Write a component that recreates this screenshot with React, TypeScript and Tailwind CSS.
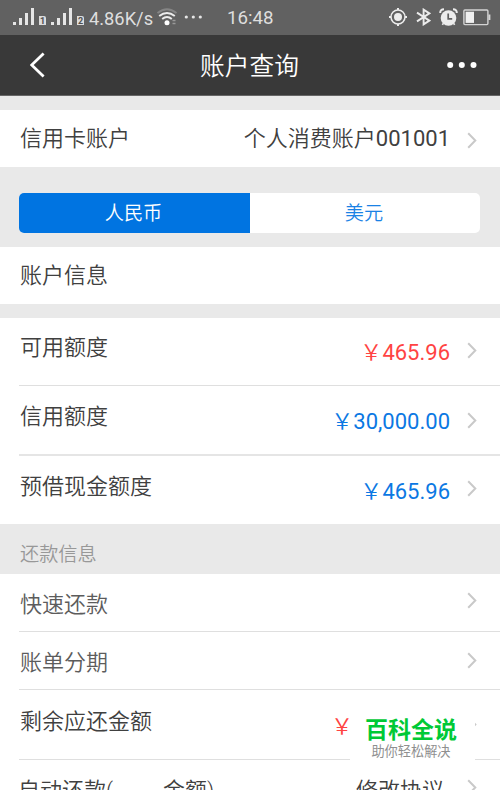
import * as React from 'react';
import clsx from 'clsx';

function Chevron({ className }: { className?: string }) {
    return (
        <svg className={clsx('w-[10px] h-[17px] shrink-0', className)} viewBox="0 0 10 17" fill="none">
            <path d="M1.2 1.3 L8.3 8.5 L1.2 15.7" stroke="#c9c9c9" strokeWidth="2" />
        </svg>
    );
}

function Signal({ slot }: { slot: string }) {
    return (
        <div className="flex items-end h-[18px]">
            <svg className="w-[22px] h-[18px]" viewBox="0 0 22 18" fill="#e6e6e6">
                <rect x="0" y="14" width="3" height="3" />
                <rect x="6" y="10" width="3" height="7" />
                <rect x="12" y="5" width="3" height="12" />
                <rect x="18" y="0" width="3" height="17" />
            </svg>
            <span className="ml-[4px] mb-px w-[7px] h-[9px] bg-[#dcdcdc] text-[#505050] text-[9px] leading-[10px] font-bold text-center rounded-tr-[2px]">{slot}</span>
        </div>
    );
}

function StatusBar() {
    return (
        <div className="h-[35px] bg-[#616161] flex items-start text-[#dedede]">
            <div className="flex mt-[8px] ml-[13px] w-[71px] justify-between">
                <Signal slot="1" />
                <Signal slot="2" />
            </div>
            <span className="ml-[5px] mt-[8px] w-[66px] text-[18.3px] leading-[21px] whitespace-nowrap">4.86K/s</span>
            <svg className="ml-[2px] mt-[8px] w-[20px] h-[18px]" viewBox="0 0 20 18" fill="none" strokeWidth="1.9">
                <path d="M0.5 5 Q10 -2.6 19.5 5" stroke="#858585" />
                <path d="M2.2 8 Q10 1.8 17.8 8" stroke="#ececec" />
                <path d="M5.2 11 Q10 7 14.8 11" stroke="#ececec" />
                <circle cx="10" cy="14.7" r="2.5" fill="#ffffff" />
                <path d="M15.5 12.5 h3 M15.5 15.5 h3" stroke="#999999" strokeWidth="1.5" />
            </svg>
            <svg className="ml-[7px] mt-[15px] w-[19px] h-[4px]" viewBox="0 0 19 4" fill="#e6e6e6">
                <circle cx="2.3" cy="2" r="1.6" />
                <circle cx="9.3" cy="2" r="1.6" />
                <circle cx="16.3" cy="2" r="1.6" />
            </svg>
            <span className="ml-[24px] mt-[8px] w-[49px] text-[18.7px] leading-[21px]">16:48</span>
            <svg className="ml-[113px] mt-[8px] w-[18px] h-[18px]" viewBox="0 0 18 18" fill="none" stroke="#ececec">
                <circle cx="9" cy="9" r="7" strokeWidth="1.5" />
                <circle cx="9" cy="9" r="4" fill="#ececec" stroke="none" />
                <path d="M9 0 v2 M9 16 v2 M0 9 h2 M16 9 h2" strokeWidth="2" />
            </svg>
            <svg className="ml-[9px] mt-[8px] w-[15px] h-[18px]" viewBox="0 0 15 18" fill="none" stroke="#ececec" strokeWidth="1.9">
                <path d="M1 4.6 L13.4 12.6 L7.6 16.4 V1.6 L13.4 5.4 L1 13.4" />
            </svg>
            <svg className="ml-[8px] mt-[8px] w-[19px] h-[19px]" viewBox="0 0 19 19" fill="none" stroke="#ececec">
                <circle cx="9.5" cy="10" r="7.8" fill="#ececec" stroke="none" />
                <path d="M1.2 5 Q1.1 1.4 5 1.3 M17.8 5 Q17.9 1.4 14 1.3" strokeWidth="2" />
                <path d="M4.2 15.5 L3.4 16.8 M14.8 15.5 L15.6 16.8" strokeWidth="1.6" />
                <path d="M9.2 5.5 V10.8 H13.2" stroke="#616161" strokeWidth="1.7" />
            </svg>
            <svg className="ml-[5px] mt-[9px] w-[28px] h-[17px]" viewBox="0 0 28 17" fill="none">
                <rect x="0.9" y="1" width="24" height="14.6" rx="1" stroke="#d4d4d4" strokeWidth="1.4" />
                <rect x="2.6" y="2.7" width="8.4" height="11.2" fill="#f0f0f0" />
                <path d="M26.4 5.5 v5.5" stroke="#d4d4d4" strokeWidth="2" />
            </svg>
        </div>
    );
}

function Header() {
    return (
        <div className="h-[61px] bg-[#393939] border-b border-[#666666] flex items-center justify-between pl-[30px] pr-[23px] text-white">
            <svg className="w-[22px] h-[26px]" viewBox="0 0 22 26" fill="none">
                <path d="M13.6 1.5 L1.7 13 L13.6 24.5" stroke="#ffffff" strokeWidth="2.8" />
            </svg>
            <h1 className="text-[24.7px] leading-[30px] font-[350] mt-[3px]">账户查询</h1>
            <svg className="w-[30px] h-[8px]" viewBox="0 0 30 8" fill="#ffffff">
                <circle cx="3.2" cy="4" r="3" />
                <circle cx="14.8" cy="4" r="3" />
                <circle cx="26.5" cy="4" r="3" />
            </svg>
        </div>
    );
}

interface RowProps {
    label: React.ReactNode;
    value?: React.ReactNode;
    className: string;
    labelClass: string;
    valueClass?: string;
    chevronClass: string;
}

function Row({ label, value, className, labelClass, valueClass, chevronClass }: RowProps) {
    return (
        <div className={clsx('ml-[19px] pl-px pr-[23px] flex items-start border-[#dfdfdf]', className)}>
            <span className={clsx('text-[22px] leading-[22px] font-[350] whitespace-pre', labelClass)}>{label}</span>
            <span className={clsx('ml-auto mr-[17px] text-[22px] leading-[22px] whitespace-nowrap', valueClass)}>{value}</span>
            <Chevron className={chevronClass} />
        </div>
    );
}

function Money({ amount }: { amount?: string }) {
    return <><span className="font-[350]">￥</span>{amount}</>;
}

export default function App() {
    return (
        <div className="relative w-[500px] h-[790px] overflow-hidden bg-[#e9e9e9] text-[#404040] font-['Roboto','Noto_Sans_CJK_SC',sans-serif]">
            <StatusBar />
            <Header />

            {/* Cuenta */}
            <div className="mt-[14px] bg-white">
                <Row label="信用卡账户" value={<>个人消费账户<span className="font-normal">001001</span></>} className="h-[57px]" labelClass="mt-[18px]" valueClass="mt-[18px] font-[350]" chevronClass="mt-[22px]" />
            </div>

            {/* Moneda */}
            <div className="mt-[26px] ml-[19px] mr-[20px] h-[40px] flex rounded-[5px] overflow-hidden bg-white text-[19.2px] font-[350]">
                <button className="w-[231px] pt-[2px] pr-[2px] bg-[#0074e1] text-white">人民币</button>
                <button className="flex-1 pt-[2px] pr-[2px] text-[#1a82e5]">美元</button>
            </div>

            <div className="mt-[14px] h-[57px] bg-white pl-[20px] pt-[18px] text-[22px] leading-[22px] font-[350]">账户信息</div>

            {/* Límites */}
            <div className="mt-[14px] bg-white">
                <Row label="可用额度" value={<Money amount="465.96" />} className="h-[68px] border-b" labelClass="mt-[19px]" valueClass="mt-[24px] text-[#ff4343]" chevronClass="mt-[24px]" />
                <Row label="信用额度" value={<Money amount="30,000.00" />} className="h-[70px] border-b-2 border-[#e5e5e5]" labelClass="mt-[20px]" valueClass="mt-[25px] text-[#0b78e3]" chevronClass="mt-[26px]" />
                <Row label="预借现金额度" value={<Money amount="465.96" />} className="h-[68px]" labelClass="mt-[20px]" valueClass="mt-[25px] text-[#0b78e3]" chevronClass="mt-[24px]" />
            </div>

            <div className="h-[50px] pl-[20px] pt-[21px] text-[19.2px] leading-[20px] text-[#989898] font-[350]">还款信息</div>

            {/* Pagos */}
            <div className="bg-white">
                <Row label="快速还款" className="h-[58px] border-b text-[#5c5c5c]" labelClass="mt-[20px]" chevronClass="mt-[18px]" />
                <Row label="账单分期" className="h-[58px] border-b text-[#5c5c5c]" labelClass="mt-[20px]" chevronClass="mt-[20px]" />
                <Row label="剩余应还金额" value={<Money />} className="h-[70px] border-b" labelClass="mt-[21px]" valueClass="mt-[26px] pr-[97px] text-[#ff4343]" chevronClass="mt-[26px]" />
                <Row
                    label={<>自动还款(<span className="inline-block w-[50px]" />金额)</>}
                    value="修改协议"
                    className="h-[58px]"
                    labelClass="mt-[20px] -ml-[2px]"
                    valueClass="mt-[20px] pr-[6px] font-[350]"
                    chevronClass="mt-[19px]"
                />
            </div>

            {/* Marca superpuesta */}
            <div className="absolute left-[350px] top-[705px] w-[125px] h-[66px] bg-white flex flex-col items-center pl-0 pr-[3px] pt-[14px] whitespace-nowrap">
                <span className="text-[23px] leading-[24px] font-bold text-[#00c936]">百科全说</span>
                <span className="mt-[2px] text-[13.2px] leading-[14px] text-[#8f8f8f]">助你轻松解决</span>
            </div>
        </div>
    );
}
